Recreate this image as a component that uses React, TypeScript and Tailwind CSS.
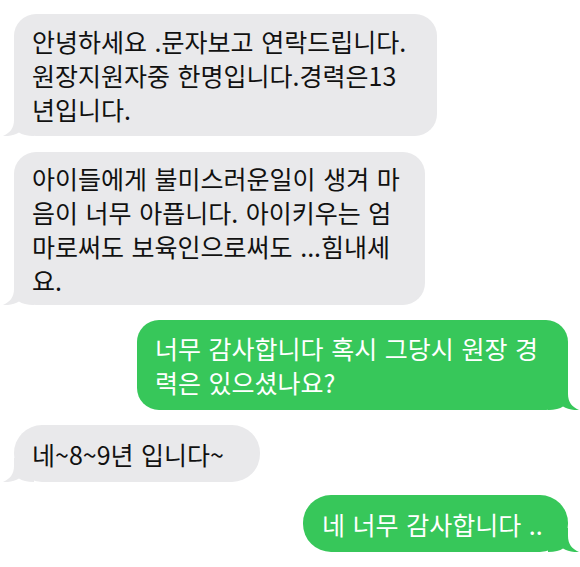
const font = { fontFamily: '"Noto Sans CJK KR", "Noto Sans", sans-serif' }

function Tail({ side, color }: { side: "left" | "right"; color: string }) {
    return (
        <svg
            width="32"
            height="24"
            viewBox="0 0 32 24"
            className={side === "left" ? "absolute -left-[12px] bottom-0" : "absolute -right-[12px] bottom-0 -scale-x-100"}
        >
            <path
                d="M12 0 L12 8 C12 16 8 21 1 24 C7 24.5 13 23 17 20.5 C20 22.5 25 24 32 24 L32 0 Z"
                fill={color}
            />
        </svg>
    )
}

function Bubble({
    lines,
    mine,
    className,
}: {
    lines: string[]
    mine?: boolean
    className: string
}) {
    return (
        <div
            className={`relative rounded-[22px] flex flex-col justify-center pl-[18px] text-[25px] leading-[34px] [word-spacing:2px] whitespace-nowrap ${
                mine ? "bg-[#37c75a] text-white self-end" : "bg-[#e9e9eb] text-[#111] self-start"
            } ${className}`}
        >
            <Tail side={mine ? "right" : "left"} color={mine ? "#37c75a" : "#e9e9eb"} />
            {lines.map((l) => (
                <div key={l} className="relative">
                    {l}
                </div>
            ))}
        </div>
    )
}

export default function App() {
    return (
        <div className="w-[580px] h-[567px] bg-white overflow-hidden flex flex-col pt-[14px] px-[12px]" style={font}>
            <Bubble
                className="ml-[2px] w-[423px] h-[122px] mb-[16px]"
                lines={["안녕하세요 .문자보고 연락드립니다.", "원장지원자중 한명입니다.경력은13", "년입니다."]}
            />
            <Bubble
                className="ml-[2px] w-[411px] h-[153px] mb-[15px]"
                lines={["아이들에게 불미스러운일이 생겨 마", "음이 너무 아픕니다. 아이키우는 엄", "마로써도 보육인으로써도 ...힘내세", "요."]}
            />
            <Bubble
                mine
                className="w-[431px] h-[90px] mb-[15px]"
                lines={["너무 감사합니다 혹시 그당시 원장 경", "력은 있으셨나요?"]}
            />
            <Bubble
                className="ml-[2px] w-[246px] h-[57px] mb-[13px] rounded-[28px]"
                lines={["네~8~9년 입니다~"]}
            />
            <Bubble
                mine
                className="w-[265px] h-[57px] rounded-[28px] pl-[19px]"
                lines={["네 너무 감사합니다 .."]}
            />
        </div>
    )
}
